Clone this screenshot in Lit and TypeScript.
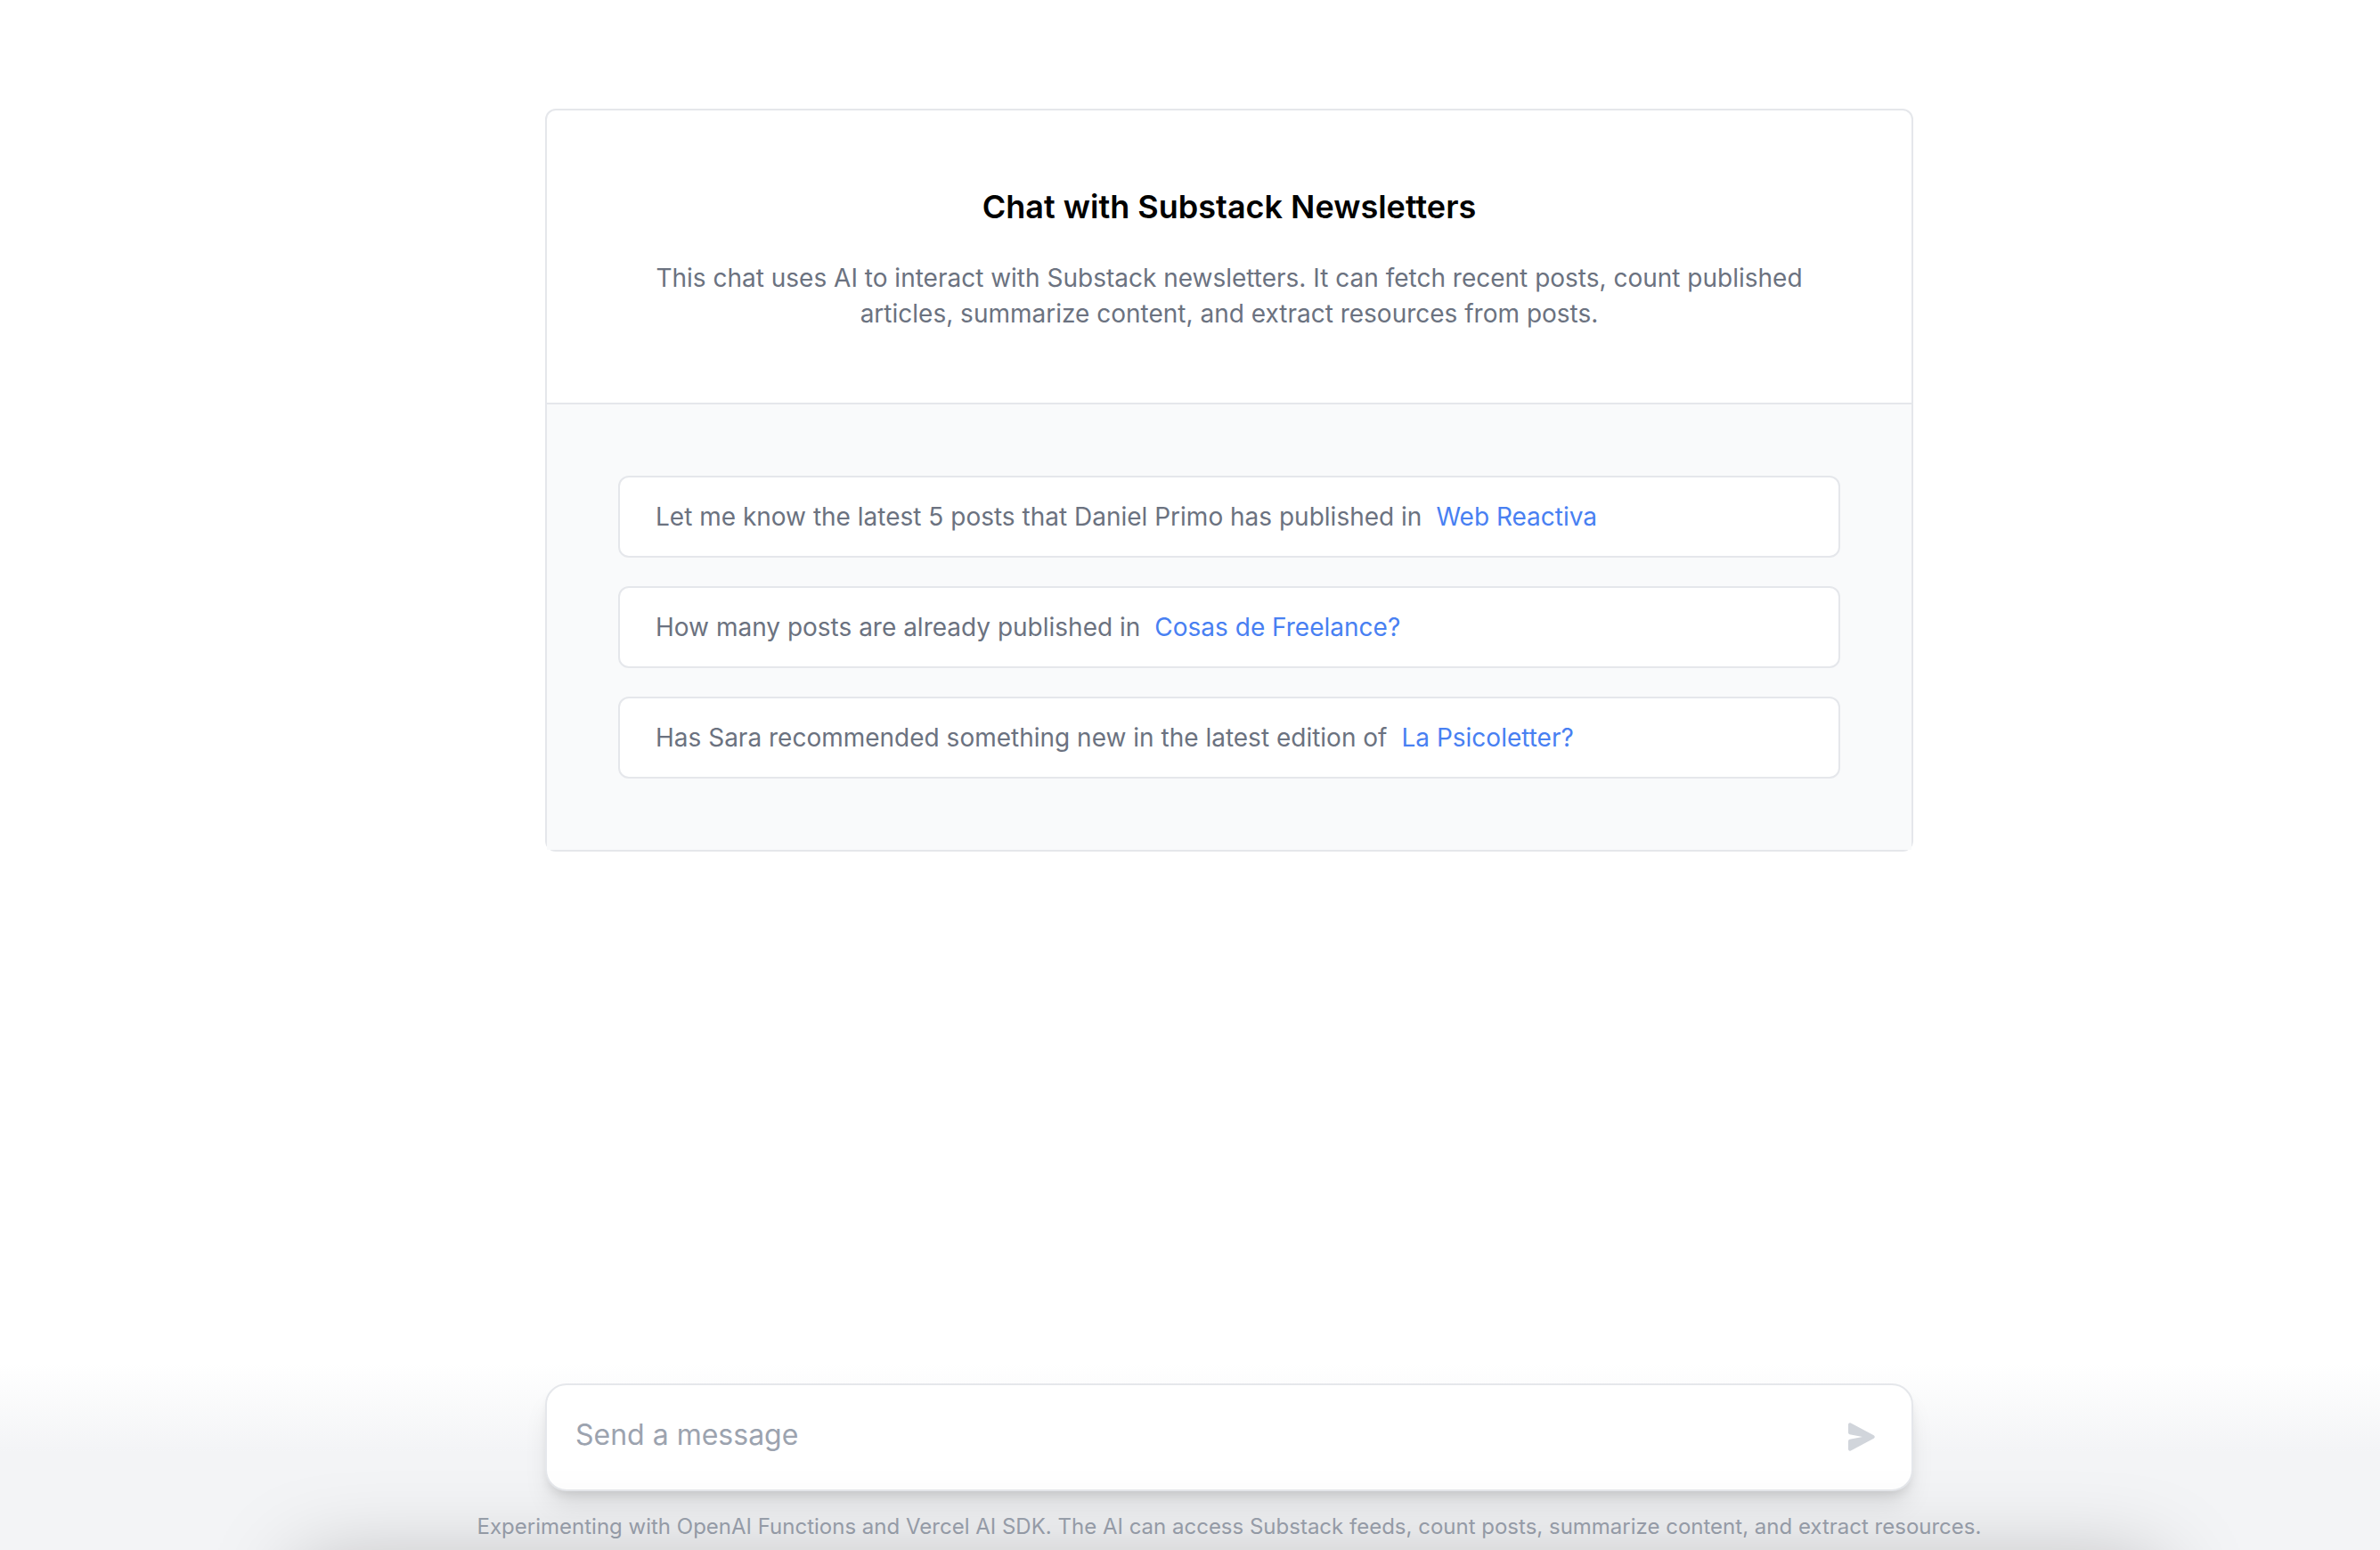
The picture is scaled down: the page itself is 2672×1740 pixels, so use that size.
import { LitElement, html, css } from "lit";
import { customElement, property, state } from "lit/decorators.js";

interface Suggestion {
  prompt: string;
  newsletter: string;
}

const SUGGESTIONS: Suggestion[] = [
  { prompt: "Let me know the latest 5 posts that Daniel Primo has published in", newsletter: "Web Reactiva" },
  { prompt: "How many posts are already published in", newsletter: "Cosas de Freelance?" },
  { prompt: "Has Sara recommended something new in the latest edition of", newsletter: "La Psicoletter?" },
];

@customElement("intro-card")
export class IntroCard extends LitElement {
  @property({ attribute: false }) suggestions: Suggestion[] = [];

  static styles = css`
    :host {
      display: block;
      box-sizing: border-box;
      border: 2px solid #e5e7eb;
      border-radius: 12px;
    }
    .header {
      display: flex;
      flex-direction: column;
      gap: 32px;
      padding: 80px;
      text-align: center;
    }
    .title {
      margin: 0;
      font-size: 36px;
      line-height: 56px;
      font-weight: 600;
      color: #000;
    }
    .description {
      margin: 0;
      font-size: 28px;
      line-height: 40px;
      color: #6b7280;
    }
    .suggestions {
      display: flex;
      flex-direction: column;
      gap: 32px;
      padding: 80px;
      border-top: 2px solid #e5e7eb;
      background: #f9fafb;
    }
    .suggestion {
      display: flex;
      gap: 16px;
      padding: 24px 40px;
      border: 2px solid #e5e7eb;
      border-radius: 12px;
      background: #fff;
      font: inherit;
      font-size: 28px;
      line-height: 40px;
      color: #6b7280;
      text-align: left;
      cursor: pointer;
    }
    .newsletter {
      color: #4880f2;
    }
  `;

  private pick(item: Suggestion) {
    this.dispatchEvent(new CustomEvent("pick", { detail: `${item.prompt} ${item.newsletter}` }));
  }

  render() {
    return html`
      <header class="header">
        <h1 class="title">Chat with Substack Newsletters</h1>
        <p class="description">
          This chat uses AI to interact with Substack newsletters. It can fetch recent posts, count published articles,
          summarize content, and extract resources from posts.
        </p>
      </header>
      <div class="suggestions">
        ${this.suggestions.map(
          (item) => html`
            <button class="suggestion" type="button" @click=${() => this.pick(item)}>
              <span>${item.prompt}</span>
              <span class="newsletter">${item.newsletter}</span>
            </button>
          `,
        )}
      </div>
    `;
  }
}

@customElement("message-composer")
export class MessageComposer extends LitElement {
  @property() value = "";

  static styles = css`
    :host {
      display: block;
    }
    .composer {
      display: flex;
      align-items: center;
      box-sizing: border-box;
      padding: 28px 24px 29px 32px;
      border: 2px solid #e5e7eb;
      border-radius: 24px;
      background: #fff;
      box-shadow: 0 20px 30px -6px rgb(0 0 0 / 0.1), 0 8px 12px -4px rgb(0 0 0 / 0.1);
    }
    .message {
      flex: 1;
      min-width: 0;
      height: 60px;
      box-sizing: border-box;
      padding: 4px 0 8px;
      border: 0;
      outline: 0;
      resize: none;
      overflow: hidden;
      background: transparent;
      font: inherit;
      font-size: 32px;
      line-height: 48px;
      color: #111827;
    }
    .message::placeholder {
      color: #9ca3af;
      opacity: 1;
    }
    .send {
      display: grid;
      place-items: center;
      width: 64px;
      height: 60px;
      padding: 0;
      border: 0;
      border-radius: 12px;
      background: transparent;
      color: #d1d5db;
    }
    .icon {
      width: 32px;
      height: 32px;
    }
  `;

  private onInput(event: Event) {
    this.value = (event.target as HTMLTextAreaElement).value;
  }

  render() {
    return html`
      <form class="composer" @submit=${(event: Event) => event.preventDefault()}>
        <textarea
          class="message"
          rows="1"
          aria-label="Message"
          placeholder="Send a message"
          .value=${this.value}
          @input=${this.onInput}
        ></textarea>
        <button class="send" type="submit" aria-label="Send" ?disabled=${!this.value}>
          <svg class="icon" viewBox="0 0 16 16" fill="currentColor" aria-hidden="true">
            <path
              d="M.5 1.163A1 1 0 0 1 1.97.28l12.868 6.837a1 1 0 0 1 0 1.766L1.969 15.72A1 1 0 0 1 .5 14.836V10.33a1 1 0 0 1 .816-.983L8.5 8 1.316 6.653A1 1 0 0 1 .5 5.67V1.163Z"
            />
          </svg>
        </button>
      </form>
    `;
  }
}

@customElement("app-root")
export class AppRoot extends LitElement {
  @state() private draft = "";

  static styles = css`
    :host {
      display: flex;
      flex-direction: column;
      box-sizing: border-box;
      min-height: 100vh;
      background: #fff;
      font-family: Inter, "Liberation Sans", sans-serif;
    }
    .content {
      flex: 1;
      padding: 122px 0 80px 88px;
    }
    .column {
      width: 100%;
      max-width: 1536px;
      margin: 0 auto;
    }
    .dock {
      position: relative;
      display: flex;
      flex-direction: column;
      gap: 24px;
      padding: 40px 0 10px 88px;
      overflow: hidden;
      background: linear-gradient(to bottom, rgb(243 244 246 / 0) 8%, #f3f4f6 52%, #f3f4f6);
    }
    /* Soft shade rising from under the bottom edge of the page. */
    .dock::after {
      content: "";
      position: absolute;
      top: 100%;
      left: 336px;
      right: 248px;
      height: 200px;
      box-shadow: 0 16px 100px rgb(0 0 0 / 0.25);
      pointer-events: none;
    }
    .note {
      margin: 0;
      font-size: 24px;
      line-height: 32px;
      text-align: center;
      color: #9ca3af;
    }
  `;

  render() {
    return html`
      <main class="content">
        <intro-card
          class="column"
          .suggestions=${SUGGESTIONS}
          @pick=${(event: CustomEvent<string>) => (this.draft = event.detail)}
        ></intro-card>
      </main>
      <footer class="dock">
        <message-composer class="column" .value=${this.draft}></message-composer>
        <p class="note">
          Experimenting with OpenAI Functions and Vercel AI SDK. The AI can access Substack feeds, count posts,
          summarize content, and extract resources.
        </p>
      </footer>
    `;
  }
}
